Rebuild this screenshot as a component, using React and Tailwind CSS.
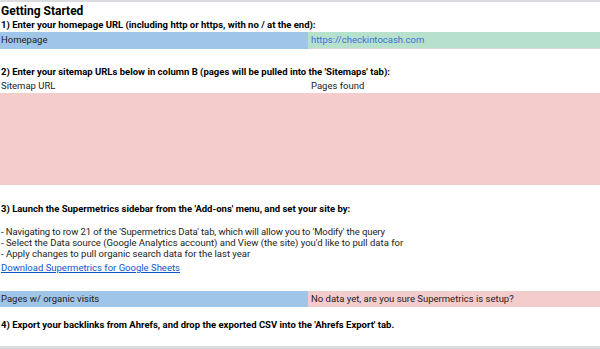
export default function App() {
  return (
    <div className="w-[600px] h-[349px] bg-white flex flex-col overflow-hidden text-[#222] font-['Roboto',sans-serif] text-[9.5px]">
      <div className="h-[2px] bg-[#dadce0] shrink-0" />
      <div className="h-[17px] flex items-center pl-[1px] text-[12px] font-bold text-black shrink-0">Getting Started</div>
      <div className="h-[13px] flex items-center pl-[1px] font-bold text-black shrink-0">
        1) Enter your homepage URL (including http or https, with no / at the end):
      </div>
      <div className="h-[17px] flex shrink-0">
        <div className="w-[308px] bg-[#9fc5e8] flex items-center pl-[1px]">Homepage</div>
        <div className="flex-1 bg-[#b7e1cd] flex items-center pl-[3px] text-[#3d6fd6] border-b border-[#d4d4d4]">https://checkintocash.com</div>
      </div>
      <div className="h-[16px] shrink-0" />
      <div className="h-[14px] flex items-center pl-[1px] font-bold text-black shrink-0">
        2) Enter your sitemap URLs below in column B (pages will be pulled into the 'Sitemaps' tab):
      </div>
      <div className="h-[14px] flex shrink-0">
        <div className="w-[308px] flex items-center pl-[1px]">Sitemap URL</div>
        <div className="flex-1 flex items-center pl-[3px]">Pages found</div>
      </div>
      <div className="h-[92px] bg-[#f4cccc] shrink-0" />
      <div className="h-[17px] shrink-0" />
      <div className="h-[14px] flex items-center pl-[1px] font-bold text-black shrink-0">
        3) Launch the Supermetrics sidebar from the 'Add-ons' menu, and set your site by:
      </div>
      <div className="h-[10px] shrink-0" />
      <div className="flex flex-col pl-[1px] leading-[11px] shrink-0">
        <div className="tracking-[-0.1px]">- Navigating to row 21 of the 'Supermetrics Data' tab, which will allow you to 'Modify' the query</div>
        <div>- Select the Data source (Google Analytics account) and View (the site) you'd like to pull data for</div>
        <div>- Apply changes to pull organic search data for the last year</div>
      </div>
      <div className="h-[3px] shrink-0" />
      <div className="h-[12px] flex items-center pl-[1px] shrink-0">
        <span className="text-[#1155cc] underline">Download Supermetrics for Google Sheets</span>
      </div>
      <div className="h-[17px] shrink-0" />
      <div className="h-[16px] flex shrink-0">
        <div className="w-[308px] bg-[#9fc5e8] flex items-center pl-[1px]">Pages w/ organic visits</div>
        <div className="flex-1 bg-[#f4cccc] flex items-center pl-[3px]">No data yet, are you sure Supermetrics is setup?</div>
      </div>
      <div className="h-[11px] shrink-0" />
      <div className="h-[14px] flex items-center pl-[1px] font-bold text-black shrink-0">
        4) Export your backlinks from Ahrefs, and drop the exported CSV into the 'Ahrefs Export' tab.
      </div>
      <div className="flex-1" />
      <div className="h-[3px] bg-[#dadce0] shrink-0" />
    </div>
  );
}
